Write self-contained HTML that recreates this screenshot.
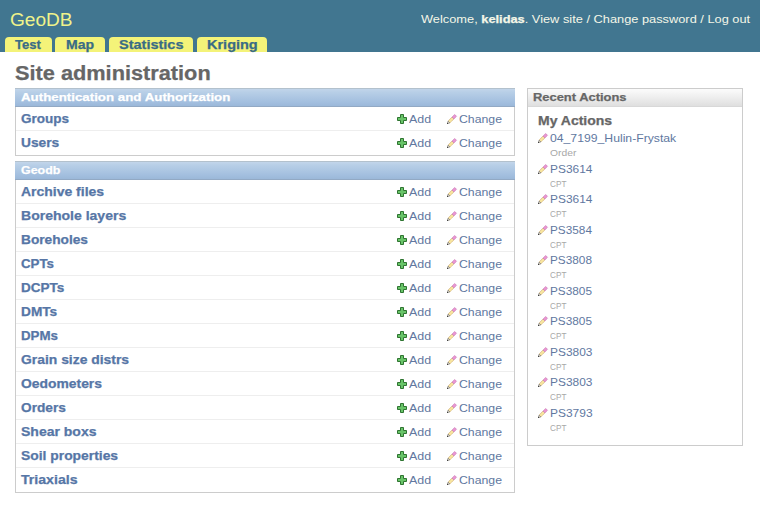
<!DOCTYPE html>
<html><head><meta charset="utf-8">
<style>
*{box-sizing:border-box}
html,body{margin:0;padding:0;background:#fff;width:760px;height:528px;overflow:hidden;position:relative;font-family:"Liberation Sans",sans-serif;color:#333}
#hdr{position:absolute;left:0;top:0;width:760px;height:52px;background:#417690}
.t{position:absolute;line-height:1;white-space:nowrap;transform-origin:0 0}
.tab{position:absolute;top:37px;height:15px;background:#f4f379;border-radius:4px 4px 0 0}
.mod{position:absolute;border:1px solid #ccc;background:#fff}
.cap{position:absolute;left:-1px;top:-1px;right:-1px;height:19px;background:linear-gradient(#b3c1cd 0,#b3c1cd 1px,#c2d5ea 1px,#b8cfe7 4px,#a3bfdf 14px,#9bb8d9 18px,#92a9c4 18px,#92a9c4 19px)}
.cap.gray{left:0;right:0;top:0;height:18px;background:linear-gradient(#fbfbfb 0,#f7f7f7 3px,#e6e6e6 13px,#dfdfdf 17px,#d8d8d8 17px,#d8d8d8 18px)}
.sep{position:absolute;left:0;right:0;height:1px;background:#eee}
.ic{position:absolute}
.t b{-webkit-text-stroke:0.25px currentColor}
</style></head><body>
<div id="hdr"></div>
<span class="t" style="left:10.00px;top:10.70px;font-size:18px;color:#f0f38a;transform:scaleX(1.0602)">GeoDB</span>
<span class="t" style="left:421.32px;top:13.65px;font-size:11px;color:#f4f6e8;transform:scaleX(1.1643)">Welcome, <b>kelidas</b>. View site / Change password / Log out</span>
<div class="tab" style="left:5px;width:47px"></div>
<span class="t" style="left:14.56px;top:38.80px;font-size:12px;color:#3a6c85;transform:scaleX(1.0844)"><b>Test</b></span>
<div class="tab" style="left:55px;width:50px"></div>
<span class="t" style="left:65.95px;top:38.80px;font-size:12px;color:#3a6c85;transform:scaleX(1.1699)"><b>Map</b></span>
<div class="tab" style="left:109px;width:84px"></div>
<span class="t" style="left:119.30px;top:38.80px;font-size:12px;color:#3a6c85;transform:scaleX(1.2088)"><b>Statistics</b></span>
<div class="tab" style="left:197px;width:70px"></div>
<span class="t" style="left:207.30px;top:38.80px;font-size:12px;color:#3a6c85;transform:scaleX(1.2078)"><b>Kriging</b></span>
<span class="t" style="left:15.00px;top:63.00px;font-size:20px;color:#666;transform:scaleX(1.0869)"><b>Site administration</b></span>
<div class="mod" style="left:15px;top:88px;width:500px;height:68px"><div class="cap"></div><div class="sep" style="top:41px"></div></div>
<span class="t" style="left:21.00px;top:91.65px;font-size:11px;color:#fff;transform:scaleX(1.2093)"><b>Authentication and Authorization</b></span>
<span class="t" style="left:21.00px;top:112.80px;font-size:12px;color:#5676a6;transform:scaleX(1.1257)"><b>Groups</b></span>
<svg width="10" height="10" viewBox="0 0 10 10" class="ic" style="left:397px;top:114px"><path d="M3.5 0.5h3v3h3v3h-3v3h-3v-3h-3v-3h3z" fill="#68c468" stroke="#2f7431" stroke-width="1"/></svg>
<span class="t" style="left:409.00px;top:113.65px;font-size:11px;color:#61789f;transform:scaleX(1.1297)">Add</span>
<svg width="12" height="12" viewBox="0 0 12 12" class="ic" style="left:446px;top:113px"><path d="M2.08 8.08 L6.08 4.08 L7.92 5.92 L3.92 9.92 Z" fill="#f9e7a0" stroke="#b58a55" stroke-width="0.75" stroke-dasharray="0.9 0.6"/><path d="M1.5 10.5 L2.08 8.08 L3.92 9.92 Z" fill="#f2e6d0" stroke="#6a6a6a" stroke-width="0.55"/><path d="M1.0 11.0 L1.4 9.6 L2.4 10.6 Z" fill="#111"/><path d="M6.08 4.08 L8.68 1.48 L10.52 3.32 L7.92 5.92 Z" fill="#ea96d2" stroke="#c574b2" stroke-width="0.6"/></svg>
<span class="t" style="left:459.00px;top:113.65px;font-size:11px;color:#61789f;transform:scaleX(1.1164)">Change</span>
<span class="t" style="left:21.00px;top:136.80px;font-size:12px;color:#5676a6;transform:scaleX(1.1459)"><b>Users</b></span>
<svg width="10" height="10" viewBox="0 0 10 10" class="ic" style="left:397px;top:138px"><path d="M3.5 0.5h3v3h3v3h-3v3h-3v-3h-3v-3h3z" fill="#68c468" stroke="#2f7431" stroke-width="1"/></svg>
<span class="t" style="left:409.00px;top:137.65px;font-size:11px;color:#61789f;transform:scaleX(1.1297)">Add</span>
<svg width="12" height="12" viewBox="0 0 12 12" class="ic" style="left:446px;top:137px"><path d="M2.08 8.08 L6.08 4.08 L7.92 5.92 L3.92 9.92 Z" fill="#f9e7a0" stroke="#b58a55" stroke-width="0.75" stroke-dasharray="0.9 0.6"/><path d="M1.5 10.5 L2.08 8.08 L3.92 9.92 Z" fill="#f2e6d0" stroke="#6a6a6a" stroke-width="0.55"/><path d="M1.0 11.0 L1.4 9.6 L2.4 10.6 Z" fill="#111"/><path d="M6.08 4.08 L8.68 1.48 L10.52 3.32 L7.92 5.92 Z" fill="#ea96d2" stroke="#c574b2" stroke-width="0.6"/></svg>
<span class="t" style="left:459.00px;top:137.65px;font-size:11px;color:#61789f;transform:scaleX(1.1164)">Change</span>
<div class="mod" style="left:15px;top:161px;width:500px;height:332px"><div class="cap"></div><div class="sep" style="top:41px"></div><div class="sep" style="top:65px"></div><div class="sep" style="top:89px"></div><div class="sep" style="top:113px"></div><div class="sep" style="top:137px"></div><div class="sep" style="top:161px"></div><div class="sep" style="top:185px"></div><div class="sep" style="top:209px"></div><div class="sep" style="top:233px"></div><div class="sep" style="top:257px"></div><div class="sep" style="top:281px"></div><div class="sep" style="top:305px"></div></div>
<span class="t" style="left:21.00px;top:164.65px;font-size:11px;color:#fff;transform:scaleX(1.1280)"><b>Geodb</b></span>
<span class="t" style="left:21.00px;top:185.80px;font-size:12px;color:#5676a6;transform:scaleX(1.1635)"><b>Archive files</b></span>
<svg width="10" height="10" viewBox="0 0 10 10" class="ic" style="left:397px;top:187px"><path d="M3.5 0.5h3v3h3v3h-3v3h-3v-3h-3v-3h3z" fill="#68c468" stroke="#2f7431" stroke-width="1"/></svg>
<span class="t" style="left:409.00px;top:186.65px;font-size:11px;color:#61789f;transform:scaleX(1.1297)">Add</span>
<svg width="12" height="12" viewBox="0 0 12 12" class="ic" style="left:446px;top:186px"><path d="M2.08 8.08 L6.08 4.08 L7.92 5.92 L3.92 9.92 Z" fill="#f9e7a0" stroke="#b58a55" stroke-width="0.75" stroke-dasharray="0.9 0.6"/><path d="M1.5 10.5 L2.08 8.08 L3.92 9.92 Z" fill="#f2e6d0" stroke="#6a6a6a" stroke-width="0.55"/><path d="M1.0 11.0 L1.4 9.6 L2.4 10.6 Z" fill="#111"/><path d="M6.08 4.08 L8.68 1.48 L10.52 3.32 L7.92 5.92 Z" fill="#ea96d2" stroke="#c574b2" stroke-width="0.6"/></svg>
<span class="t" style="left:459.00px;top:186.65px;font-size:11px;color:#61789f;transform:scaleX(1.1164)">Change</span>
<span class="t" style="left:21.00px;top:209.80px;font-size:12px;color:#5676a6;transform:scaleX(1.1684)"><b>Borehole layers</b></span>
<svg width="10" height="10" viewBox="0 0 10 10" class="ic" style="left:397px;top:211px"><path d="M3.5 0.5h3v3h3v3h-3v3h-3v-3h-3v-3h3z" fill="#68c468" stroke="#2f7431" stroke-width="1"/></svg>
<span class="t" style="left:409.00px;top:210.65px;font-size:11px;color:#61789f;transform:scaleX(1.1297)">Add</span>
<svg width="12" height="12" viewBox="0 0 12 12" class="ic" style="left:446px;top:210px"><path d="M2.08 8.08 L6.08 4.08 L7.92 5.92 L3.92 9.92 Z" fill="#f9e7a0" stroke="#b58a55" stroke-width="0.75" stroke-dasharray="0.9 0.6"/><path d="M1.5 10.5 L2.08 8.08 L3.92 9.92 Z" fill="#f2e6d0" stroke="#6a6a6a" stroke-width="0.55"/><path d="M1.0 11.0 L1.4 9.6 L2.4 10.6 Z" fill="#111"/><path d="M6.08 4.08 L8.68 1.48 L10.52 3.32 L7.92 5.92 Z" fill="#ea96d2" stroke="#c574b2" stroke-width="0.6"/></svg>
<span class="t" style="left:459.00px;top:210.65px;font-size:11px;color:#61789f;transform:scaleX(1.1164)">Change</span>
<span class="t" style="left:21.00px;top:233.80px;font-size:12px;color:#5676a6;transform:scaleX(1.1413)"><b>Boreholes</b></span>
<svg width="10" height="10" viewBox="0 0 10 10" class="ic" style="left:397px;top:235px"><path d="M3.5 0.5h3v3h3v3h-3v3h-3v-3h-3v-3h3z" fill="#68c468" stroke="#2f7431" stroke-width="1"/></svg>
<span class="t" style="left:409.00px;top:234.65px;font-size:11px;color:#61789f;transform:scaleX(1.1297)">Add</span>
<svg width="12" height="12" viewBox="0 0 12 12" class="ic" style="left:446px;top:234px"><path d="M2.08 8.08 L6.08 4.08 L7.92 5.92 L3.92 9.92 Z" fill="#f9e7a0" stroke="#b58a55" stroke-width="0.75" stroke-dasharray="0.9 0.6"/><path d="M1.5 10.5 L2.08 8.08 L3.92 9.92 Z" fill="#f2e6d0" stroke="#6a6a6a" stroke-width="0.55"/><path d="M1.0 11.0 L1.4 9.6 L2.4 10.6 Z" fill="#111"/><path d="M6.08 4.08 L8.68 1.48 L10.52 3.32 L7.92 5.92 Z" fill="#ea96d2" stroke="#c574b2" stroke-width="0.6"/></svg>
<span class="t" style="left:459.00px;top:234.65px;font-size:11px;color:#61789f;transform:scaleX(1.1164)">Change</span>
<span class="t" style="left:21.00px;top:257.80px;font-size:12px;color:#5676a6;transform:scaleX(1.1086)"><b>CPTs</b></span>
<svg width="10" height="10" viewBox="0 0 10 10" class="ic" style="left:397px;top:259px"><path d="M3.5 0.5h3v3h3v3h-3v3h-3v-3h-3v-3h3z" fill="#68c468" stroke="#2f7431" stroke-width="1"/></svg>
<span class="t" style="left:409.00px;top:258.65px;font-size:11px;color:#61789f;transform:scaleX(1.1297)">Add</span>
<svg width="12" height="12" viewBox="0 0 12 12" class="ic" style="left:446px;top:258px"><path d="M2.08 8.08 L6.08 4.08 L7.92 5.92 L3.92 9.92 Z" fill="#f9e7a0" stroke="#b58a55" stroke-width="0.75" stroke-dasharray="0.9 0.6"/><path d="M1.5 10.5 L2.08 8.08 L3.92 9.92 Z" fill="#f2e6d0" stroke="#6a6a6a" stroke-width="0.55"/><path d="M1.0 11.0 L1.4 9.6 L2.4 10.6 Z" fill="#111"/><path d="M6.08 4.08 L8.68 1.48 L10.52 3.32 L7.92 5.92 Z" fill="#ea96d2" stroke="#c574b2" stroke-width="0.6"/></svg>
<span class="t" style="left:459.00px;top:258.65px;font-size:11px;color:#61789f;transform:scaleX(1.1164)">Change</span>
<span class="t" style="left:21.00px;top:281.80px;font-size:12px;color:#5676a6;transform:scaleX(1.1280)"><b>DCPTs</b></span>
<svg width="10" height="10" viewBox="0 0 10 10" class="ic" style="left:397px;top:283px"><path d="M3.5 0.5h3v3h3v3h-3v3h-3v-3h-3v-3h3z" fill="#68c468" stroke="#2f7431" stroke-width="1"/></svg>
<span class="t" style="left:409.00px;top:282.65px;font-size:11px;color:#61789f;transform:scaleX(1.1297)">Add</span>
<svg width="12" height="12" viewBox="0 0 12 12" class="ic" style="left:446px;top:282px"><path d="M2.08 8.08 L6.08 4.08 L7.92 5.92 L3.92 9.92 Z" fill="#f9e7a0" stroke="#b58a55" stroke-width="0.75" stroke-dasharray="0.9 0.6"/><path d="M1.5 10.5 L2.08 8.08 L3.92 9.92 Z" fill="#f2e6d0" stroke="#6a6a6a" stroke-width="0.55"/><path d="M1.0 11.0 L1.4 9.6 L2.4 10.6 Z" fill="#111"/><path d="M6.08 4.08 L8.68 1.48 L10.52 3.32 L7.92 5.92 Z" fill="#ea96d2" stroke="#c574b2" stroke-width="0.6"/></svg>
<span class="t" style="left:459.00px;top:282.65px;font-size:11px;color:#61789f;transform:scaleX(1.1164)">Change</span>
<span class="t" style="left:21.00px;top:305.80px;font-size:12px;color:#5676a6;transform:scaleX(1.1399)"><b>DMTs</b></span>
<svg width="10" height="10" viewBox="0 0 10 10" class="ic" style="left:397px;top:307px"><path d="M3.5 0.5h3v3h3v3h-3v3h-3v-3h-3v-3h3z" fill="#68c468" stroke="#2f7431" stroke-width="1"/></svg>
<span class="t" style="left:409.00px;top:306.65px;font-size:11px;color:#61789f;transform:scaleX(1.1297)">Add</span>
<svg width="12" height="12" viewBox="0 0 12 12" class="ic" style="left:446px;top:306px"><path d="M2.08 8.08 L6.08 4.08 L7.92 5.92 L3.92 9.92 Z" fill="#f9e7a0" stroke="#b58a55" stroke-width="0.75" stroke-dasharray="0.9 0.6"/><path d="M1.5 10.5 L2.08 8.08 L3.92 9.92 Z" fill="#f2e6d0" stroke="#6a6a6a" stroke-width="0.55"/><path d="M1.0 11.0 L1.4 9.6 L2.4 10.6 Z" fill="#111"/><path d="M6.08 4.08 L8.68 1.48 L10.52 3.32 L7.92 5.92 Z" fill="#ea96d2" stroke="#c574b2" stroke-width="0.6"/></svg>
<span class="t" style="left:459.00px;top:306.65px;font-size:11px;color:#61789f;transform:scaleX(1.1164)">Change</span>
<span class="t" style="left:21.00px;top:329.80px;font-size:12px;color:#5676a6;transform:scaleX(1.1090)"><b>DPMs</b></span>
<svg width="10" height="10" viewBox="0 0 10 10" class="ic" style="left:397px;top:331px"><path d="M3.5 0.5h3v3h3v3h-3v3h-3v-3h-3v-3h3z" fill="#68c468" stroke="#2f7431" stroke-width="1"/></svg>
<span class="t" style="left:409.00px;top:330.65px;font-size:11px;color:#61789f;transform:scaleX(1.1297)">Add</span>
<svg width="12" height="12" viewBox="0 0 12 12" class="ic" style="left:446px;top:330px"><path d="M2.08 8.08 L6.08 4.08 L7.92 5.92 L3.92 9.92 Z" fill="#f9e7a0" stroke="#b58a55" stroke-width="0.75" stroke-dasharray="0.9 0.6"/><path d="M1.5 10.5 L2.08 8.08 L3.92 9.92 Z" fill="#f2e6d0" stroke="#6a6a6a" stroke-width="0.55"/><path d="M1.0 11.0 L1.4 9.6 L2.4 10.6 Z" fill="#111"/><path d="M6.08 4.08 L8.68 1.48 L10.52 3.32 L7.92 5.92 Z" fill="#ea96d2" stroke="#c574b2" stroke-width="0.6"/></svg>
<span class="t" style="left:459.00px;top:330.65px;font-size:11px;color:#61789f;transform:scaleX(1.1164)">Change</span>
<span class="t" style="left:21.00px;top:353.80px;font-size:12px;color:#5676a6;transform:scaleX(1.1574)"><b>Grain size distrs</b></span>
<svg width="10" height="10" viewBox="0 0 10 10" class="ic" style="left:397px;top:355px"><path d="M3.5 0.5h3v3h3v3h-3v3h-3v-3h-3v-3h3z" fill="#68c468" stroke="#2f7431" stroke-width="1"/></svg>
<span class="t" style="left:409.00px;top:354.65px;font-size:11px;color:#61789f;transform:scaleX(1.1297)">Add</span>
<svg width="12" height="12" viewBox="0 0 12 12" class="ic" style="left:446px;top:354px"><path d="M2.08 8.08 L6.08 4.08 L7.92 5.92 L3.92 9.92 Z" fill="#f9e7a0" stroke="#b58a55" stroke-width="0.75" stroke-dasharray="0.9 0.6"/><path d="M1.5 10.5 L2.08 8.08 L3.92 9.92 Z" fill="#f2e6d0" stroke="#6a6a6a" stroke-width="0.55"/><path d="M1.0 11.0 L1.4 9.6 L2.4 10.6 Z" fill="#111"/><path d="M6.08 4.08 L8.68 1.48 L10.52 3.32 L7.92 5.92 Z" fill="#ea96d2" stroke="#c574b2" stroke-width="0.6"/></svg>
<span class="t" style="left:459.00px;top:354.65px;font-size:11px;color:#61789f;transform:scaleX(1.1164)">Change</span>
<span class="t" style="left:21.00px;top:377.80px;font-size:12px;color:#5676a6;transform:scaleX(1.1563)"><b>Oedometers</b></span>
<svg width="10" height="10" viewBox="0 0 10 10" class="ic" style="left:397px;top:379px"><path d="M3.5 0.5h3v3h3v3h-3v3h-3v-3h-3v-3h3z" fill="#68c468" stroke="#2f7431" stroke-width="1"/></svg>
<span class="t" style="left:409.00px;top:378.65px;font-size:11px;color:#61789f;transform:scaleX(1.1297)">Add</span>
<svg width="12" height="12" viewBox="0 0 12 12" class="ic" style="left:446px;top:378px"><path d="M2.08 8.08 L6.08 4.08 L7.92 5.92 L3.92 9.92 Z" fill="#f9e7a0" stroke="#b58a55" stroke-width="0.75" stroke-dasharray="0.9 0.6"/><path d="M1.5 10.5 L2.08 8.08 L3.92 9.92 Z" fill="#f2e6d0" stroke="#6a6a6a" stroke-width="0.55"/><path d="M1.0 11.0 L1.4 9.6 L2.4 10.6 Z" fill="#111"/><path d="M6.08 4.08 L8.68 1.48 L10.52 3.32 L7.92 5.92 Z" fill="#ea96d2" stroke="#c574b2" stroke-width="0.6"/></svg>
<span class="t" style="left:459.00px;top:378.65px;font-size:11px;color:#61789f;transform:scaleX(1.1164)">Change</span>
<span class="t" style="left:21.00px;top:401.80px;font-size:12px;color:#5676a6;transform:scaleX(1.1391)"><b>Orders</b></span>
<svg width="10" height="10" viewBox="0 0 10 10" class="ic" style="left:397px;top:403px"><path d="M3.5 0.5h3v3h3v3h-3v3h-3v-3h-3v-3h3z" fill="#68c468" stroke="#2f7431" stroke-width="1"/></svg>
<span class="t" style="left:409.00px;top:402.65px;font-size:11px;color:#61789f;transform:scaleX(1.1297)">Add</span>
<svg width="12" height="12" viewBox="0 0 12 12" class="ic" style="left:446px;top:402px"><path d="M2.08 8.08 L6.08 4.08 L7.92 5.92 L3.92 9.92 Z" fill="#f9e7a0" stroke="#b58a55" stroke-width="0.75" stroke-dasharray="0.9 0.6"/><path d="M1.5 10.5 L2.08 8.08 L3.92 9.92 Z" fill="#f2e6d0" stroke="#6a6a6a" stroke-width="0.55"/><path d="M1.0 11.0 L1.4 9.6 L2.4 10.6 Z" fill="#111"/><path d="M6.08 4.08 L8.68 1.48 L10.52 3.32 L7.92 5.92 Z" fill="#ea96d2" stroke="#c574b2" stroke-width="0.6"/></svg>
<span class="t" style="left:459.00px;top:402.65px;font-size:11px;color:#61789f;transform:scaleX(1.1164)">Change</span>
<span class="t" style="left:21.00px;top:425.80px;font-size:12px;color:#5676a6;transform:scaleX(1.1668)"><b>Shear boxs</b></span>
<svg width="10" height="10" viewBox="0 0 10 10" class="ic" style="left:397px;top:427px"><path d="M3.5 0.5h3v3h3v3h-3v3h-3v-3h-3v-3h3z" fill="#68c468" stroke="#2f7431" stroke-width="1"/></svg>
<span class="t" style="left:409.00px;top:426.65px;font-size:11px;color:#61789f;transform:scaleX(1.1297)">Add</span>
<svg width="12" height="12" viewBox="0 0 12 12" class="ic" style="left:446px;top:426px"><path d="M2.08 8.08 L6.08 4.08 L7.92 5.92 L3.92 9.92 Z" fill="#f9e7a0" stroke="#b58a55" stroke-width="0.75" stroke-dasharray="0.9 0.6"/><path d="M1.5 10.5 L2.08 8.08 L3.92 9.92 Z" fill="#f2e6d0" stroke="#6a6a6a" stroke-width="0.55"/><path d="M1.0 11.0 L1.4 9.6 L2.4 10.6 Z" fill="#111"/><path d="M6.08 4.08 L8.68 1.48 L10.52 3.32 L7.92 5.92 Z" fill="#ea96d2" stroke="#c574b2" stroke-width="0.6"/></svg>
<span class="t" style="left:459.00px;top:426.65px;font-size:11px;color:#61789f;transform:scaleX(1.1164)">Change</span>
<span class="t" style="left:21.00px;top:449.80px;font-size:12px;color:#5676a6;transform:scaleX(1.1552)"><b>Soil properties</b></span>
<svg width="10" height="10" viewBox="0 0 10 10" class="ic" style="left:397px;top:451px"><path d="M3.5 0.5h3v3h3v3h-3v3h-3v-3h-3v-3h3z" fill="#68c468" stroke="#2f7431" stroke-width="1"/></svg>
<span class="t" style="left:409.00px;top:450.65px;font-size:11px;color:#61789f;transform:scaleX(1.1297)">Add</span>
<svg width="12" height="12" viewBox="0 0 12 12" class="ic" style="left:446px;top:450px"><path d="M2.08 8.08 L6.08 4.08 L7.92 5.92 L3.92 9.92 Z" fill="#f9e7a0" stroke="#b58a55" stroke-width="0.75" stroke-dasharray="0.9 0.6"/><path d="M1.5 10.5 L2.08 8.08 L3.92 9.92 Z" fill="#f2e6d0" stroke="#6a6a6a" stroke-width="0.55"/><path d="M1.0 11.0 L1.4 9.6 L2.4 10.6 Z" fill="#111"/><path d="M6.08 4.08 L8.68 1.48 L10.52 3.32 L7.92 5.92 Z" fill="#ea96d2" stroke="#c574b2" stroke-width="0.6"/></svg>
<span class="t" style="left:459.00px;top:450.65px;font-size:11px;color:#61789f;transform:scaleX(1.1164)">Change</span>
<span class="t" style="left:21.00px;top:473.80px;font-size:12px;color:#5676a6;transform:scaleX(1.1769)"><b>Triaxials</b></span>
<svg width="10" height="10" viewBox="0 0 10 10" class="ic" style="left:397px;top:475px"><path d="M3.5 0.5h3v3h3v3h-3v3h-3v-3h-3v-3h3z" fill="#68c468" stroke="#2f7431" stroke-width="1"/></svg>
<span class="t" style="left:409.00px;top:474.65px;font-size:11px;color:#61789f;transform:scaleX(1.1297)">Add</span>
<svg width="12" height="12" viewBox="0 0 12 12" class="ic" style="left:446px;top:474px"><path d="M2.08 8.08 L6.08 4.08 L7.92 5.92 L3.92 9.92 Z" fill="#f9e7a0" stroke="#b58a55" stroke-width="0.75" stroke-dasharray="0.9 0.6"/><path d="M1.5 10.5 L2.08 8.08 L3.92 9.92 Z" fill="#f2e6d0" stroke="#6a6a6a" stroke-width="0.55"/><path d="M1.0 11.0 L1.4 9.6 L2.4 10.6 Z" fill="#111"/><path d="M6.08 4.08 L8.68 1.48 L10.52 3.32 L7.92 5.92 Z" fill="#ea96d2" stroke="#c574b2" stroke-width="0.6"/></svg>
<span class="t" style="left:459.00px;top:474.65px;font-size:11px;color:#61789f;transform:scaleX(1.1164)">Change</span>
<div class="mod" style="left:527px;top:88px;width:216px;height:358px"><div class="cap gray"></div></div>
<span class="t" style="left:533.00px;top:91.65px;font-size:11px;color:#666;transform:scaleX(1.1740)"><b>Recent Actions</b></span>
<span class="t" style="left:538.00px;top:114.80px;font-size:12px;color:#666;transform:scaleX(1.1657)"><b>My Actions</b></span>
<svg width="12" height="12" viewBox="0 0 12 12" class="ic" style="left:537px;top:132px"><path d="M2.08 8.08 L6.08 4.08 L7.92 5.92 L3.92 9.92 Z" fill="#f9e7a0" stroke="#b58a55" stroke-width="0.75" stroke-dasharray="0.9 0.6"/><path d="M1.5 10.5 L2.08 8.08 L3.92 9.92 Z" fill="#f2e6d0" stroke="#6a6a6a" stroke-width="0.55"/><path d="M1.0 11.0 L1.4 9.6 L2.4 10.6 Z" fill="#111"/><path d="M6.08 4.08 L8.68 1.48 L10.52 3.32 L7.92 5.92 Z" fill="#ea96d2" stroke="#c574b2" stroke-width="0.6"/></svg>
<span class="t" style="left:550.00px;top:132.65px;font-size:11px;color:#61789f;transform:scaleX(1.1098)">04_7199_Hulin-Frystak</span>
<span class="t" style="left:550.00px;top:147.87px;font-size:9.8px;color:#a8a8a8;transform:scaleX(1.0507)">Order</span>
<svg width="12" height="12" viewBox="0 0 12 12" class="ic" style="left:537px;top:163px"><path d="M2.08 8.08 L6.08 4.08 L7.92 5.92 L3.92 9.92 Z" fill="#f9e7a0" stroke="#b58a55" stroke-width="0.75" stroke-dasharray="0.9 0.6"/><path d="M1.5 10.5 L2.08 8.08 L3.92 9.92 Z" fill="#f2e6d0" stroke="#6a6a6a" stroke-width="0.55"/><path d="M1.0 11.0 L1.4 9.6 L2.4 10.6 Z" fill="#111"/><path d="M6.08 4.08 L8.68 1.48 L10.52 3.32 L7.92 5.92 Z" fill="#ea96d2" stroke="#c574b2" stroke-width="0.6"/></svg>
<span class="t" style="left:550.00px;top:163.65px;font-size:11px;color:#61789f;transform:scaleX(1.0833)">PS3614</span>
<span class="t" style="left:550.00px;top:178.87px;font-size:9.8px;color:#a8a8a8;transform:scaleX(0.8395)">CPT</span>
<svg width="12" height="12" viewBox="0 0 12 12" class="ic" style="left:537px;top:193px"><path d="M2.08 8.08 L6.08 4.08 L7.92 5.92 L3.92 9.92 Z" fill="#f9e7a0" stroke="#b58a55" stroke-width="0.75" stroke-dasharray="0.9 0.6"/><path d="M1.5 10.5 L2.08 8.08 L3.92 9.92 Z" fill="#f2e6d0" stroke="#6a6a6a" stroke-width="0.55"/><path d="M1.0 11.0 L1.4 9.6 L2.4 10.6 Z" fill="#111"/><path d="M6.08 4.08 L8.68 1.48 L10.52 3.32 L7.92 5.92 Z" fill="#ea96d2" stroke="#c574b2" stroke-width="0.6"/></svg>
<span class="t" style="left:550.00px;top:193.65px;font-size:11px;color:#61789f;transform:scaleX(1.0833)">PS3614</span>
<span class="t" style="left:550.00px;top:208.87px;font-size:9.8px;color:#a8a8a8;transform:scaleX(0.8395)">CPT</span>
<svg width="12" height="12" viewBox="0 0 12 12" class="ic" style="left:537px;top:224px"><path d="M2.08 8.08 L6.08 4.08 L7.92 5.92 L3.92 9.92 Z" fill="#f9e7a0" stroke="#b58a55" stroke-width="0.75" stroke-dasharray="0.9 0.6"/><path d="M1.5 10.5 L2.08 8.08 L3.92 9.92 Z" fill="#f2e6d0" stroke="#6a6a6a" stroke-width="0.55"/><path d="M1.0 11.0 L1.4 9.6 L2.4 10.6 Z" fill="#111"/><path d="M6.08 4.08 L8.68 1.48 L10.52 3.32 L7.92 5.92 Z" fill="#ea96d2" stroke="#c574b2" stroke-width="0.6"/></svg>
<span class="t" style="left:550.00px;top:224.65px;font-size:11px;color:#61789f;transform:scaleX(1.0726)">PS3584</span>
<span class="t" style="left:550.00px;top:239.87px;font-size:9.8px;color:#a8a8a8;transform:scaleX(0.8395)">CPT</span>
<svg width="12" height="12" viewBox="0 0 12 12" class="ic" style="left:537px;top:254px"><path d="M2.08 8.08 L6.08 4.08 L7.92 5.92 L3.92 9.92 Z" fill="#f9e7a0" stroke="#b58a55" stroke-width="0.75" stroke-dasharray="0.9 0.6"/><path d="M1.5 10.5 L2.08 8.08 L3.92 9.92 Z" fill="#f2e6d0" stroke="#6a6a6a" stroke-width="0.55"/><path d="M1.0 11.0 L1.4 9.6 L2.4 10.6 Z" fill="#111"/><path d="M6.08 4.08 L8.68 1.48 L10.52 3.32 L7.92 5.92 Z" fill="#ea96d2" stroke="#c574b2" stroke-width="0.6"/></svg>
<span class="t" style="left:550.00px;top:254.65px;font-size:11px;color:#61789f;transform:scaleX(1.0726)">PS3808</span>
<span class="t" style="left:550.00px;top:269.87px;font-size:9.8px;color:#a8a8a8;transform:scaleX(0.8395)">CPT</span>
<svg width="12" height="12" viewBox="0 0 12 12" class="ic" style="left:537px;top:285px"><path d="M2.08 8.08 L6.08 4.08 L7.92 5.92 L3.92 9.92 Z" fill="#f9e7a0" stroke="#b58a55" stroke-width="0.75" stroke-dasharray="0.9 0.6"/><path d="M1.5 10.5 L2.08 8.08 L3.92 9.92 Z" fill="#f2e6d0" stroke="#6a6a6a" stroke-width="0.55"/><path d="M1.0 11.0 L1.4 9.6 L2.4 10.6 Z" fill="#111"/><path d="M6.08 4.08 L8.68 1.48 L10.52 3.32 L7.92 5.92 Z" fill="#ea96d2" stroke="#c574b2" stroke-width="0.6"/></svg>
<span class="t" style="left:550.00px;top:285.65px;font-size:11px;color:#61789f;transform:scaleX(1.0726)">PS3805</span>
<span class="t" style="left:550.00px;top:300.87px;font-size:9.8px;color:#a8a8a8;transform:scaleX(0.8395)">CPT</span>
<svg width="12" height="12" viewBox="0 0 12 12" class="ic" style="left:537px;top:315px"><path d="M2.08 8.08 L6.08 4.08 L7.92 5.92 L3.92 9.92 Z" fill="#f9e7a0" stroke="#b58a55" stroke-width="0.75" stroke-dasharray="0.9 0.6"/><path d="M1.5 10.5 L2.08 8.08 L3.92 9.92 Z" fill="#f2e6d0" stroke="#6a6a6a" stroke-width="0.55"/><path d="M1.0 11.0 L1.4 9.6 L2.4 10.6 Z" fill="#111"/><path d="M6.08 4.08 L8.68 1.48 L10.52 3.32 L7.92 5.92 Z" fill="#ea96d2" stroke="#c574b2" stroke-width="0.6"/></svg>
<span class="t" style="left:550.00px;top:315.65px;font-size:11px;color:#61789f;transform:scaleX(1.0726)">PS3805</span>
<span class="t" style="left:550.00px;top:330.87px;font-size:9.8px;color:#a8a8a8;transform:scaleX(0.8395)">CPT</span>
<svg width="12" height="12" viewBox="0 0 12 12" class="ic" style="left:537px;top:346px"><path d="M2.08 8.08 L6.08 4.08 L7.92 5.92 L3.92 9.92 Z" fill="#f9e7a0" stroke="#b58a55" stroke-width="0.75" stroke-dasharray="0.9 0.6"/><path d="M1.5 10.5 L2.08 8.08 L3.92 9.92 Z" fill="#f2e6d0" stroke="#6a6a6a" stroke-width="0.55"/><path d="M1.0 11.0 L1.4 9.6 L2.4 10.6 Z" fill="#111"/><path d="M6.08 4.08 L8.68 1.48 L10.52 3.32 L7.92 5.92 Z" fill="#ea96d2" stroke="#c574b2" stroke-width="0.6"/></svg>
<span class="t" style="left:550.00px;top:346.65px;font-size:11px;color:#61789f;transform:scaleX(1.0832)">PS3803</span>
<span class="t" style="left:550.00px;top:361.87px;font-size:9.8px;color:#a8a8a8;transform:scaleX(0.8395)">CPT</span>
<svg width="12" height="12" viewBox="0 0 12 12" class="ic" style="left:537px;top:376px"><path d="M2.08 8.08 L6.08 4.08 L7.92 5.92 L3.92 9.92 Z" fill="#f9e7a0" stroke="#b58a55" stroke-width="0.75" stroke-dasharray="0.9 0.6"/><path d="M1.5 10.5 L2.08 8.08 L3.92 9.92 Z" fill="#f2e6d0" stroke="#6a6a6a" stroke-width="0.55"/><path d="M1.0 11.0 L1.4 9.6 L2.4 10.6 Z" fill="#111"/><path d="M6.08 4.08 L8.68 1.48 L10.52 3.32 L7.92 5.92 Z" fill="#ea96d2" stroke="#c574b2" stroke-width="0.6"/></svg>
<span class="t" style="left:550.00px;top:376.65px;font-size:11px;color:#61789f;transform:scaleX(1.0832)">PS3803</span>
<span class="t" style="left:550.00px;top:391.87px;font-size:9.8px;color:#a8a8a8;transform:scaleX(0.8395)">CPT</span>
<svg width="12" height="12" viewBox="0 0 12 12" class="ic" style="left:537px;top:407px"><path d="M2.08 8.08 L6.08 4.08 L7.92 5.92 L3.92 9.92 Z" fill="#f9e7a0" stroke="#b58a55" stroke-width="0.75" stroke-dasharray="0.9 0.6"/><path d="M1.5 10.5 L2.08 8.08 L3.92 9.92 Z" fill="#f2e6d0" stroke="#6a6a6a" stroke-width="0.55"/><path d="M1.0 11.0 L1.4 9.6 L2.4 10.6 Z" fill="#111"/><path d="M6.08 4.08 L8.68 1.48 L10.52 3.32 L7.92 5.92 Z" fill="#ea96d2" stroke="#c574b2" stroke-width="0.6"/></svg>
<span class="t" style="left:550.00px;top:407.65px;font-size:11px;color:#61789f;transform:scaleX(1.0870)">PS3793</span>
<span class="t" style="left:550.00px;top:422.87px;font-size:9.8px;color:#a8a8a8;transform:scaleX(0.8395)">CPT</span>
</body></html>
